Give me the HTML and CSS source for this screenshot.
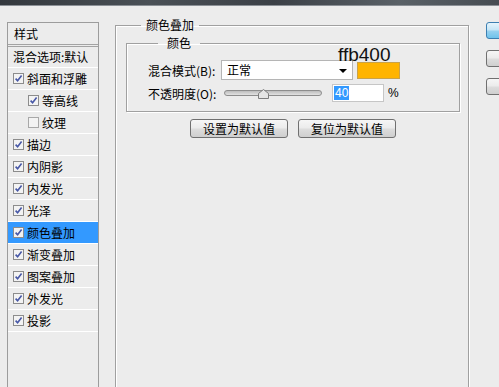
FILE: index.html
```html
<!DOCTYPE html>
<html lang="zh-CN">
<head>
    <meta charset="UTF-8">
    <title>图层样式 - 颜色叠加</title>
    <link rel="stylesheet" href="styles.css">
</head>
<body>
    <div class="titlebar"></div>

    <div class="dialog">
        <!-- left: style list -->
        <div class="style-list">
            <div class="list-head">样式</div>
            <div class="list-blend">混合选项:默认</div>
            <div class="layer-row"><span class="cb"><svg viewBox="0 0 11 11" width="11" height="11"><rect x="0.5" y="0.5" width="10" height="10" fill="#f3f3f3" stroke="#8c8c8c"/><path d="M2.6 5.6 L4.6 7.8 L8.6 2.6" fill="none" stroke="#4757a6" stroke-width="1.6"/></svg></span>斜面和浮雕</div>
            <div class="layer-row sub"><span class="cb"><svg viewBox="0 0 11 11" width="11" height="11"><rect x="0.5" y="0.5" width="10" height="10" fill="#f3f3f3" stroke="#8c8c8c"/><path d="M2.6 5.6 L4.6 7.8 L8.6 2.6" fill="none" stroke="#4757a6" stroke-width="1.6"/></svg></span>等高线</div>
            <div class="layer-row sub"><span class="cb"><svg viewBox="0 0 11 11" width="11" height="11"><rect x="0.5" y="0.5" width="10" height="10" fill="#f3f3f3" stroke="#a8a8a8"/></svg></span>纹理</div>
            <div class="layer-row"><span class="cb"><svg viewBox="0 0 11 11" width="11" height="11"><rect x="0.5" y="0.5" width="10" height="10" fill="#f3f3f3" stroke="#8c8c8c"/><path d="M2.6 5.6 L4.6 7.8 L8.6 2.6" fill="none" stroke="#4757a6" stroke-width="1.6"/></svg></span>描边</div>
            <div class="layer-row"><span class="cb"><svg viewBox="0 0 11 11" width="11" height="11"><rect x="0.5" y="0.5" width="10" height="10" fill="#f3f3f3" stroke="#8c8c8c"/><path d="M2.6 5.6 L4.6 7.8 L8.6 2.6" fill="none" stroke="#4757a6" stroke-width="1.6"/></svg></span>内阴影</div>
            <div class="layer-row"><span class="cb"><svg viewBox="0 0 11 11" width="11" height="11"><rect x="0.5" y="0.5" width="10" height="10" fill="#f3f3f3" stroke="#8c8c8c"/><path d="M2.6 5.6 L4.6 7.8 L8.6 2.6" fill="none" stroke="#4757a6" stroke-width="1.6"/></svg></span>内发光</div>
            <div class="layer-row"><span class="cb"><svg viewBox="0 0 11 11" width="11" height="11"><rect x="0.5" y="0.5" width="10" height="10" fill="#f3f3f3" stroke="#8c8c8c"/><path d="M2.6 5.6 L4.6 7.8 L8.6 2.6" fill="none" stroke="#4757a6" stroke-width="1.6"/></svg></span>光泽</div>
            <div class="layer-row active"><span class="cb"><svg viewBox="0 0 11 11" width="11" height="11"><rect x="0.5" y="0.5" width="10" height="10" fill="#f3f3f3" stroke="#8c8c8c"/><path d="M2.6 5.6 L4.6 7.8 L8.6 2.6" fill="none" stroke="#4757a6" stroke-width="1.6"/></svg></span>颜色叠加</div>
            <div class="layer-row"><span class="cb"><svg viewBox="0 0 11 11" width="11" height="11"><rect x="0.5" y="0.5" width="10" height="10" fill="#f3f3f3" stroke="#8c8c8c"/><path d="M2.6 5.6 L4.6 7.8 L8.6 2.6" fill="none" stroke="#4757a6" stroke-width="1.6"/></svg></span>渐变叠加</div>
            <div class="layer-row"><span class="cb"><svg viewBox="0 0 11 11" width="11" height="11"><rect x="0.5" y="0.5" width="10" height="10" fill="#f3f3f3" stroke="#8c8c8c"/><path d="M2.6 5.6 L4.6 7.8 L8.6 2.6" fill="none" stroke="#4757a6" stroke-width="1.6"/></svg></span>图案叠加</div>
            <div class="layer-row"><span class="cb"><svg viewBox="0 0 11 11" width="11" height="11"><rect x="0.5" y="0.5" width="10" height="10" fill="#f3f3f3" stroke="#8c8c8c"/><path d="M2.6 5.6 L4.6 7.8 L8.6 2.6" fill="none" stroke="#4757a6" stroke-width="1.6"/></svg></span>外发光</div>
            <div class="layer-row"><span class="cb"><svg viewBox="0 0 11 11" width="11" height="11"><rect x="0.5" y="0.5" width="10" height="10" fill="#f3f3f3" stroke="#8c8c8c"/><path d="M2.6 5.6 L4.6 7.8 L8.6 2.6" fill="none" stroke="#4757a6" stroke-width="1.6"/></svg></span>投影</div>
        </div>

        <!-- middle: colour overlay settings -->
        <fieldset class="group outer">
            <legend>颜色叠加</legend>
            <fieldset class="group inner">
                <legend>颜色</legend>
                <div class="field-row">
                    <span class="field-label">混合模式(B):</span>
                    <div class="fake-select">正常<span class="arrow"></span></div>
                    <div class="swatch"></div>
                    <span class="hex-note">ffb400</span>
                </div>
                <div class="field-row second">
                    <span class="field-label wide">不透明度(O):</span>
                    <div class="slider">
                        <div class="track"></div>
                        <svg class="thumb" viewBox="0 0 11 10" width="11" height="10"><path d="M5.5 0.5 L10.5 4.5 L10.5 9.5 L0.5 9.5 L0.5 4.5 Z" fill="#e4e4e4" stroke="#7d7d7d"/></svg>
                    </div>
                    <div class="num-input"><span class="sel">40</span></div>
                    <span class="unit">%</span>
                </div>
            </fieldset>
            <div class="btn-row">
                <button class="btn">设置为默认值</button>
                <button class="btn">复位为默认值</button>
            </div>
        </fieldset>

        <!-- right: dialog buttons (cut off) -->
        <div class="side-buttons">
            <button class="btn side default"></button>
            <button class="btn side"></button>
            <button class="btn side"></button>
        </div>
    </div>
</body>
</html>
```

FILE: styles.css
```css
body {
    margin: 0;
    width: 499px;
    height: 387px;
    overflow: hidden;
    background-color: #ececec;
    font-family: "Noto Sans CJK SC", "Liberation Sans", sans-serif;
    font-size: 12px;
    color: #000;
}

.titlebar {
    height: 6px;
    background: linear-gradient(to right, #33383d, #4a5056 30%, #3b4046 55%, #5a6167 80%, #464c52);
    border-bottom: 1px solid #8b9096;
    box-sizing: border-box;
}

.dialog {
    display: flex;
    align-items: flex-start;
    padding: 12px 0 0 7px;
}

/* style list */
.style-list {
    width: 92px;
    height: 400px;
    margin-top: 4px;
    box-sizing: border-box;
    border: 1px solid #9c9c9c;
    flex-shrink: 0;
}

.list-head {
    height: 21px;
    line-height: 21px;
    padding-left: 6px;
    border-bottom: 3px double #a3a3a3;
}

.list-blend {
    height: 20px;
    line-height: 20px;
    padding-left: 5px;
    border-bottom: 1px solid #fff;
    white-space: nowrap;
}

.layer-row {
    height: 21px;
    display: flex;
    align-items: center;
    gap: 3px;
    padding-left: 5px;
    border-bottom: 1px solid #fff;
    white-space: nowrap;
}

.layer-row.sub {
    padding-left: 20px;
}

.layer-row.active {
    background-color: #3399ff;
}

.cb {
    display: flex;
    width: 11px;
    height: 11px;
}

/* group boxes */
.group {
    margin: 0;
    border: 1px solid #a0a0a0;
    box-shadow: 1px 1px 0 #fff, inset 1px 1px 0 #fff;
    min-inline-size: 0;
}

.group legend {
    line-height: 14px;
    padding: 0 5px;
}

.outer {
    width: 354px;
    height: 420px;
    margin-left: 16px;
    box-sizing: border-box;
    padding: 4px 8px 0 10px;
    flex-shrink: 0;
}

.outer > legend {
    margin-left: 15px;
}

.inner {
    position: relative;
    padding: 10px 0 9px 21px;
}

.inner > legend {
    margin-left: 10px;
    padding: 0 9px 0 9px;
}

.field-row {
    display: flex;
    align-items: center;
    height: 20px;
}

.field-row.second {
    height: 18px;
    margin-top: 4px;
}

.field-label {
    width: 73px;
    white-space: nowrap;
}

.field-label.wide {
    width: 76px;
}

.fake-select {
    position: relative;
    width: 132px;
    height: 20px;
    box-sizing: border-box;
    background-color: #fff;
    border: 1px solid #b5b5b5;
    padding-left: 5px;
    line-height: 18px;
}

.arrow {
    position: absolute;
    right: 5px;
    top: 8px;
    border-left: 4px solid transparent;
    border-right: 4px solid transparent;
    border-top: 4px solid #000;
}

.swatch {
    width: 43px;
    height: 17px;
    margin-left: 4px;
    box-sizing: border-box;
    background-color: #ffb400;
    border: 1px solid #c9a24a;
}

.hex-note {
    position: absolute;
    left: 211px;
    top: -5px;
    font-family: "Liberation Sans", sans-serif;
    font-size: 19px;
    line-height: 20px;
    color: #111;
}

.slider {
    position: relative;
    width: 98px;
    height: 18px;
}

.track {
    position: absolute;
    left: 0;
    right: 0;
    top: 6px;
    height: 4px;
    border: 1px solid #8d8d8d;
    border-radius: 3px;
    background: linear-gradient(#bdbdbd, #e2e2e2);
}

.thumb {
    position: absolute;
    left: 34px;
    top: 5px;
}

.num-input {
    width: 52px;
    height: 18px;
    margin-left: 10px;
    box-sizing: border-box;
    background-color: #fff;
    border: 1px solid #c6c6c6;
    padding: 1px 0 0 1px;
    font-family: "Liberation Sans", sans-serif;
    line-height: 14px;
}

.sel {
    display: inline-block;
    background-color: #3399ff;
    color: #fff;
    padding: 0 1px;
}

.unit {
    margin-left: 4px;
    font-family: "Liberation Sans", sans-serif;
}

/* buttons */
.btn-row {
    display: flex;
    justify-content: center;
    gap: 10px;
    margin-top: 7px;
}

.btn {
    width: 98px;
    height: 19px;
    padding: 0;
    border: 1px solid #707070;
    border-radius: 3px;
    background: linear-gradient(#f6f6f6 0%, #ebebeb 48%, #dddddd 52%, #cfcfcf 100%);
    font-family: "Noto Sans CJK SC", sans-serif;
    font-size: 12px;
    line-height: 16px;
    color: #000;
}

.side-buttons {
    display: flex;
    flex-direction: column;
    gap: 11px;
    margin-left: 17px;
    margin-top: 4px;
}

.btn.side {
    width: 80px;
    height: 17px;
}

.btn.side.default {
    border-color: #3c7fb1;
    background: linear-gradient(#e5f4fc 0%, #c4e5f6 48%, #98d1ef 52%, #6fc3ec 100%);
}
```
